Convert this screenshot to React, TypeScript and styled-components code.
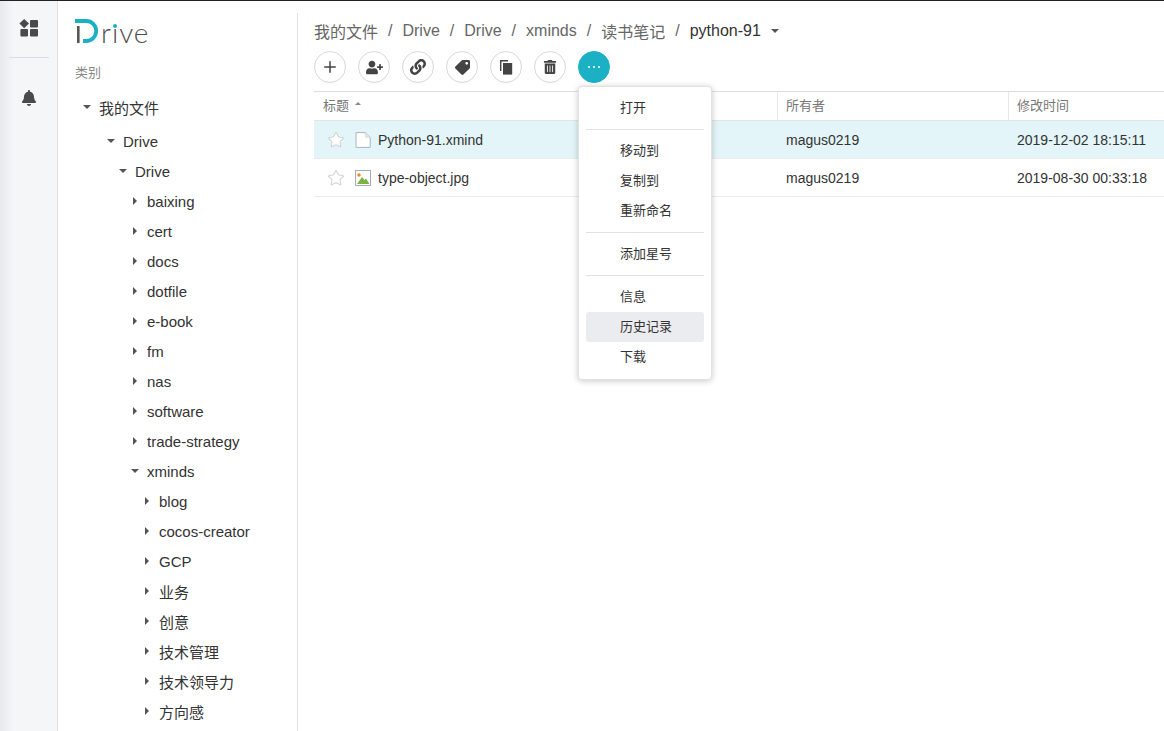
import React from 'react'
import styled, { createGlobalStyle, css } from 'styled-components'
import { FaBell, FaLink, FaTag, FaTrashAlt, FaUserPlus } from 'react-icons/fa'
import { Plus, Star } from 'lucide-react'

const sans = `"Liberation Sans", "Noto Sans CJK SC", sans-serif`

const Global = createGlobalStyle`
  html, body {
    margin: 0;
    height: 100%;
    overflow: hidden;
    background: #fff;
    font-family: ${sans};
    color: #333;
  }
`

const Page = styled.div`
  display: flex;
  height: 731px;
  border-top: 1px solid #222;
  box-sizing: border-box;
  overflow: hidden;
`

const Rail = styled.nav`
  width: 58px;
  flex: none;
  box-sizing: border-box;
  display: flex;
  flex-direction: column;
  align-items: center;
  padding-top: 18px;
  background: linear-gradient(to right, #e8e9ec, #f5f6f8 14px);
  border-right: 1px solid #dfe0e3;
  color: #4a4a4d;
`

const RailDivider = styled.div`
  width: 40px;
  height: 1px;
  margin: 20px 0 32px;
  background: #dcdde0;
`

const Sidebar = styled.aside`
  width: 239px;
  flex: none;
  box-sizing: border-box;
  padding: 18px 0 0 17px;
  overflow: hidden;
`

const Logo = styled.div`
  display: flex;
  align-items: flex-end;
  height: 26px;
  color: #4d4d4d;
`

const LogoText = styled.span`
  margin-left: 3px;
  font-family: Lato, sans-serif;
  font-weight: 300;
  font-size: 28px;
  line-height: 26px;
  letter-spacing: 1px;
`

const LogoI = styled.span`
  position: relative;
  &::after {
    content: '';
    position: absolute;
    left: 1px;
    top: 9px;
    width: 4px;
    height: 4px;
    border-radius: 50%;
    background: #1cb0c4;
  }
`

const SectionLabel = styled.div`
  margin-top: 19px;
  font-size: 13px;
  line-height: 18px;
  color: #888;
`

const Tree = styled.ul`
  list-style: none;
  margin: 10px 0 0;
  padding: 0;
`

const Node = styled.li<{ $depth: number; $root?: boolean }>`
  display: flex;
  align-items: center;
  gap: 8px;
  height: ${p => (p.$root ? 34 : 30)}px;
  padding-left: ${p => p.$depth}px;
  font-size: 15px;
  color: #333;
  white-space: nowrap;
  ${p => p.$root && css`padding-bottom: 4px; box-sizing: border-box;`}
`

const CaretSlot = styled.span`
  width: 8px;
  display: flex;
  justify-content: center;
  flex: none;
`

const Caret = styled.span<{ $dir: 'up' | 'down' | 'right'; $size?: number }>`
  display: inline-block;
  width: 0;
  height: 0;
  ${p => {
    const s = p.$size ?? 4.5
    if (p.$dir === 'right') {
      return css`
        border-left: ${s}px solid #555;
        border-top: ${s}px solid transparent;
        border-bottom: ${s}px solid transparent;
      `
    }
    if (p.$dir === 'up') {
      return css`
        border-bottom: ${s}px solid #888;
        border-left: ${s}px solid transparent;
        border-right: ${s}px solid transparent;
      `
    }
    return css`
      border-top: ${s}px solid #555;
      border-left: ${s}px solid transparent;
      border-right: ${s}px solid transparent;
    `
  }}
`

const Main = styled.main`
  position: relative;
  flex: 1;
  min-width: 0;
  margin-top: 12px;
  padding: 7px 0 0 16px;
  border-left: 1px solid #e0e0e0;
`

const Crumbs = styled.div`
  display: flex;
  align-items: center;
  gap: 10px;
  height: 22px;
  font-size: 16px;
  color: #666;
  white-space: nowrap;
`

const Crumb = styled.span<{ $current?: boolean }>`
  color: ${p => (p.$current ? '#333' : '#666')};
`

const Toolbar = styled.div`
  display: flex;
  gap: 12px;
  margin-top: 9px;
`

const RoundBtn = styled.button<{ $active?: boolean }>`
  appearance: none;
  width: 32px;
  height: 32px;
  padding: 0;
  display: flex;
  align-items: center;
  justify-content: center;
  border-radius: 50%;
  border: 1px solid ${p => (p.$active ? '#1cb0c4' : '#d8d8d8')};
  background: ${p => (p.$active ? '#1cb0c4' : '#fff')};
  color: ${p => (p.$active ? '#fff' : '#444')};
`

const Dots = styled.span`
  display: flex;
  gap: 3px;
`

const Dot = styled.i`
  width: 2px;
  height: 2px;
  background: #fff;
  border-radius: 50%;
`

const Table = styled.div`
  margin-top: 8px;
`

const Row = styled.div<{ $selected?: boolean; $head?: boolean }>`
  display: grid;
  grid-template-columns: 463px 231px 1fr;
  align-items: center;
  box-sizing: border-box;
  height: ${p => (p.$head ? 30 : 38)}px;
  font-size: ${p => (p.$head ? 13 : 14)}px;
  color: ${p => (p.$head ? '#777' : '#333')};
  background: ${p => (p.$selected ? '#e3f5f8' : 'transparent')};
  border-top: ${p => (p.$head ? '1px solid #ddd' : 'none')};
  border-bottom: 1px solid ${p => (p.$head ? '#e4e4e4' : '#ebebeb')};
`

const Cell = styled.div<{ $divider?: boolean; $head?: boolean }>`
  display: flex;
  align-items: center;
  height: 100%;
  box-sizing: border-box;
  padding-left: ${p => (p.$divider ? 8 : 9)}px;
  padding-bottom: ${p => (p.$head ? 3 : 0)}px;
  border-left: ${p => (p.$divider ? '1px solid #e8e8e8' : 'none')};
  white-space: nowrap;
`

const TitleCell = styled(Cell)`
  padding-left: 13px;
`

const HeadCaret = styled.span`
  margin-left: 6px;
  display: flex;
  margin-bottom: 3px;
`

const FileIcon = styled.span`
  display: flex;
  margin: 0 7px 0 10px;
`

const Menu = styled.ul`
  position: absolute;
  z-index: 10;
  left: 280px;
  top: 73px;
  width: 134px;
  box-sizing: border-box;
  list-style: none;
  margin: 0;
  padding: 6px 7px 7px;
  background: #fff;
  border-radius: 4px;
  border: 1px solid #e2e2e2;
  box-shadow: 0 1px 6px rgba(0, 0, 0, 0.22);
`

const MenuItem = styled.li<{ $hover?: boolean }>`
  height: 30px;
  line-height: 30px;
  padding-left: 34px;
  font-size: 13px;
  color: #333;
  border-radius: 3px;
  background: ${p => (p.$hover ? '#ebecf0' : 'transparent')};
`

const MenuDivider = styled.li`
  height: 1px;
  margin: 6px 0;
  background: #e2e2e2;
`

const DashIcon = () => (
  <svg width="20" height="18" viewBox="0 0 20 18" fill="currentColor">
    <path d="M5.2 0 10 4.6 5.2 9.2.4 4.6z" />
    <rect x="11" y="1" width="8" height="7.4" rx="1" />
    <rect x="1.4" y="10" width="7.6" height="7.6" rx="1" />
    <rect x="11" y="10" width="8" height="7.6" rx="1" />
  </svg>
)

const LogoD = () => (
  <svg width="23" height="26" viewBox="0 0 23 26">
    <rect x="2" y="7" width="2.6" height="17" fill="#555" />
    <path d="M0 2h11.2a10 10 0 0 1 0 20H8" fill="none" stroke="#1cb0c4" strokeWidth="3.8" />
  </svg>
)

const CopyIcon = () => (
  <svg width="14" height="15" viewBox="0 0 14 15" fill="currentColor">
    <path d="M1 0h8v1.4H2.4V11H1z" />
    <path d="M4 3h9.2v11.6H4z" />
  </svg>
)

const DocIcon = () => (
  <svg width="16" height="16" viewBox="0 0 16 16">
    <path d="M1 .6h9.6l4.6 4.6v10.2H1z" fill="#fff" stroke="#a9b6bd" />
    <path d="M10.6.6v4.6h4.6" fill="#e3e8ea" stroke="#c4cdd2" strokeWidth=".6" />
  </svg>
)

const ImageIcon = () => (
  <svg width="16" height="16" viewBox="0 0 16 16">
    <rect x=".5" y=".5" width="15" height="15" fill="#fff" stroke="#a2aeb4" />
    <circle cx="4" cy="5" r="1.7" fill="#f08a1d" />
    <path d="M2 14 7 7l2.4 3 1.6-1.4 3.4 5.4z" fill="#7cb342" />
  </svg>
)

const tree = [
  { label: '我的文件', x: 8, open: true, root: true },
  { label: 'Drive', x: 32, open: true },
  { label: 'Drive', x: 44, open: true },
  { label: 'baixing', x: 56 },
  { label: 'cert', x: 56 },
  { label: 'docs', x: 56 },
  { label: 'dotfile', x: 56 },
  { label: 'e-book', x: 56 },
  { label: 'fm', x: 56 },
  { label: 'nas', x: 56 },
  { label: 'software', x: 56 },
  { label: 'trade-strategy', x: 56 },
  { label: 'xminds', x: 56, open: true },
  { label: 'blog', x: 68 },
  { label: 'cocos-creator', x: 68 },
  { label: 'GCP', x: 68 },
  { label: '业务', x: 68 },
  { label: '创意', x: 68 },
  { label: '技术管理', x: 68 },
  { label: '技术领导力', x: 68 },
  { label: '方向感', x: 68 },
]

const crumbs = ['我的文件', 'Drive', 'Drive', 'xminds', '读书笔记']

const files = [
  { name: 'Python-91.xmind', date: '2019-12-02 18:15:11', icon: <DocIcon />, selected: true },
  { name: 'type-object.jpg', date: '2019-08-30 00:33:18', icon: <ImageIcon /> },
]

export default function App() {
  return (
    <Page>
      <Global />
      <Rail>
        <DashIcon />
        <RailDivider />
        <FaBell size={16} />
      </Rail>

      <Sidebar>
        <Logo>
          <LogoD />
          <LogoText>r<LogoI>ı</LogoI>ve</LogoText>
        </Logo>
        <SectionLabel>类别</SectionLabel>
        <Tree>
          {tree.map((n, i) => (
            <Node key={i} $depth={n.x} $root={n.root}>
              <CaretSlot>
                <Caret $dir={n.open ? 'down' : 'right'} />
              </CaretSlot>
              {n.label}
            </Node>
          ))}
        </Tree>
      </Sidebar>

      <Main>
        <Crumbs>
          {crumbs.map((c, i) => (
            <React.Fragment key={i}>
              <Crumb>{c}</Crumb>
              <span>/</span>
            </React.Fragment>
          ))}
          <Crumb $current>python-91</Crumb>
          <Caret $dir="down" />
        </Crumbs>

        <Toolbar>
          <RoundBtn><Plus size={18} strokeWidth={2} /></RoundBtn>
          <RoundBtn><FaUserPlus size={17} /></RoundBtn>
          <RoundBtn><FaLink size={16} /></RoundBtn>
          <RoundBtn><FaTag size={15} style={{ transform: 'scaleX(-1)' }} /></RoundBtn>
          <RoundBtn><CopyIcon /></RoundBtn>
          <RoundBtn><FaTrashAlt size={14} /></RoundBtn>
          <RoundBtn $active>
            <Dots><Dot /><Dot /><Dot /></Dots>
          </RoundBtn>
        </Toolbar>

        <Table>
          <Row $head>
            <Cell $head>
              标题
              <HeadCaret><Caret $dir="up" $size={3.5} /></HeadCaret>
            </Cell>
            <Cell $divider $head>所有者</Cell>
            <Cell $divider $head>修改时间</Cell>
          </Row>
          {files.map(f => (
            <Row key={f.name} $selected={f.selected}>
              <TitleCell>
                <Star size={18} color="#cfd3d6" strokeWidth={1.4} fill="#fff" />
                <FileIcon>{f.icon}</FileIcon>
                {f.name}
              </TitleCell>
              <Cell>magus0219</Cell>
              <Cell>{f.date}</Cell>
            </Row>
          ))}
        </Table>

        <Menu>
          <MenuItem>打开</MenuItem>
          <MenuDivider />
          <MenuItem>移动到</MenuItem>
          <MenuItem>复制到</MenuItem>
          <MenuItem>重新命名</MenuItem>
          <MenuDivider />
          <MenuItem>添加星号</MenuItem>
          <MenuDivider />
          <MenuItem>信息</MenuItem>
          <MenuItem $hover>历史记录</MenuItem>
          <MenuItem>下载</MenuItem>
        </Menu>
      </Main>
    </Page>
  )
}
